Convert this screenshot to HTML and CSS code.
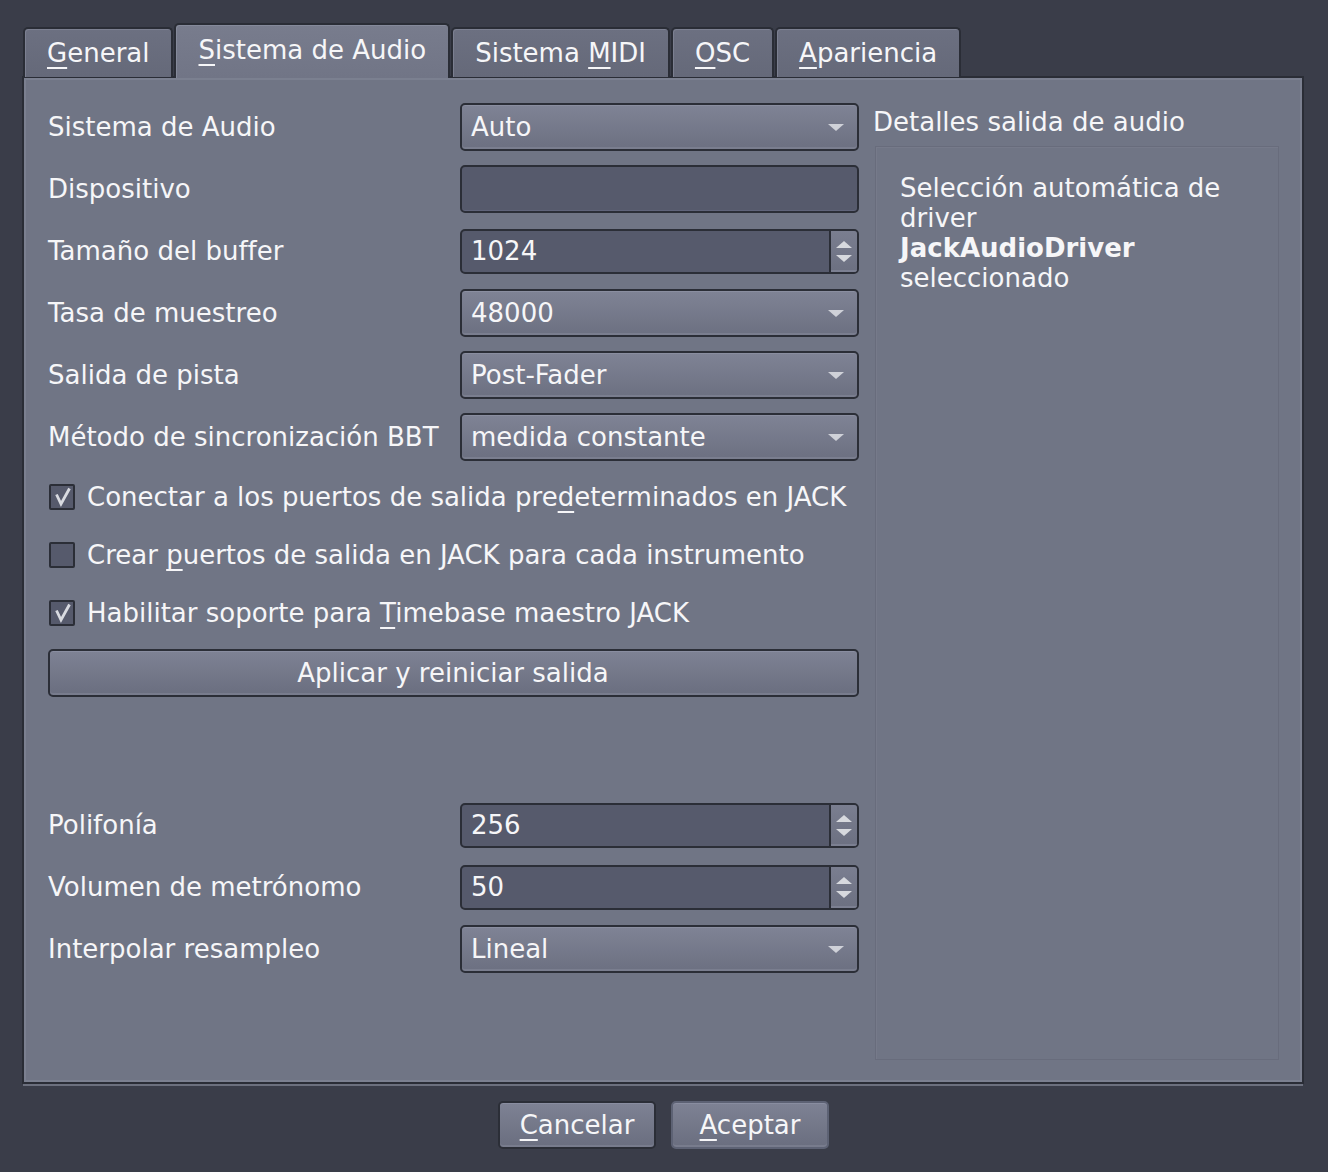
FILE: index.html
```html
<!DOCTYPE html>
<html lang="es">
<head>
<meta charset="utf-8">
<title>Preferencias</title>
<link rel="stylesheet" href="styles.css">
</head>
<body>
<div class="dialog">
  <div class="tabbar">
    <div class="tab"><span><u>G</u>eneral</span></div>
    <div class="tab active"><span><u>S</u>istema de Audio</span></div>
    <div class="tab"><span>Sistema <u>M</u>IDI</span></div>
    <div class="tab"><span><u>O</u>SC</span></div>
    <div class="tab"><span><u>A</u>pariencia</span></div>
  </div>
  <div class="panel">
    <div class="left">
      <div class="row"><span class="label">Sistema de Audio</span><div class="combo">Auto<span class="arrow"></span></div></div>
      <div class="row"><span class="label">Dispositivo</span><div class="edit"></div></div>
      <div class="row"><span class="label">Tamaño del buffer</span><div class="spin"><span class="val">1024</span><span class="btns"><span class="up"></span><span class="down"></span></span></div></div>
      <div class="row"><span class="label">Tasa de muestreo</span><div class="combo">48000<span class="arrow"></span></div></div>
      <div class="row"><span class="label">Salida de pista</span><div class="combo">Post-Fader<span class="arrow"></span></div></div>
      <div class="row"><span class="label">Método de sincronización BBT</span><div class="combo">medida constante<span class="arrow"></span></div></div>
      <div class="check"><span class="box"><svg class="tick" width="22" height="22" viewBox="0 0 22 22"><path d="M5.5 8.5 L10 18 L18.5 2.5" /></svg></span><span>Conectar a los puertos de salida pre<u>d</u>eterminados en JACK</span></div>
      <div class="check"><span class="box"></span><span>Crear <u>p</u>uertos de salida en JACK para cada instrumento</span></div>
      <div class="check"><span class="box"><svg class="tick" width="22" height="22" viewBox="0 0 22 22"><path d="M5.5 8.5 L10 18 L18.5 2.5" /></svg></span><span>Habilitar soporte para <u>T</u>imebase maestro JACK</span></div>
      <div class="button wide">Aplicar y reiniciar salida</div>
      <div class="row gap-top"><span class="label">Polifonía</span><div class="spin"><span class="val">256</span><span class="btns"><span class="up"></span><span class="down"></span></span></div></div>
      <div class="row"><span class="label">Volumen de metrónomo</span><div class="spin"><span class="val">50</span><span class="btns"><span class="up"></span><span class="down"></span></span></div></div>
      <div class="row"><span class="label">Interpolar resampleo</span><div class="combo">Lineal<span class="arrow"></span></div></div>
    </div>
    <div class="right">
      <div class="group-title">Detalles salida de audio</div>
      <div class="group">
        <p>Selección automática de<br>driver<br><b>JackAudioDriver</b><br>seleccionado</p>
      </div>
    </div>
  </div>
  <div class="actions">
    <div class="button action focus"><span><u>C</u>ancelar</span></div>
    <div class="button action"><span><u>A</u>ceptar</span></div>
  </div>
</div>
</body>
</html>
```
FILE: styles.css
```css
html, body {
  margin: 0;
  padding: 0;
}
body {
  background: #3a3d49;
  width: 1328px;
  height: 1172px;
  overflow: hidden;
  font-family: "DejaVu Sans", "Noto Sans", sans-serif;
  font-size: 26px;
  color: #f6f6f8;
}
u {
  text-decoration: underline;
  text-decoration-thickness: 2px;
  text-underline-offset: 5px;
}
.dialog {
  padding: 23px 24px 0 22px;
}
.tabbar {
  display: flex;
  align-items: flex-end;
  padding-left: 1px;
  height: 54px;
  position: relative;
  z-index: 2;
}
.tab {
  box-sizing: border-box;
  height: 50px;
  margin-right: 1px;
  padding: 0 22px;
  line-height: 48px;
  border: 2px solid #2a2d36;
  border-bottom: none;
  border-radius: 5px 5px 0 0;
  background: linear-gradient(#6c7081, #656979);
  box-shadow: inset 1px 1px 0 #7c8091;
  white-space: nowrap;
}
.tab.active {
  height: 55px;
  margin-bottom: -1px;
  background: linear-gradient(#787c8d, #717586);
  box-shadow: inset 1px 1px 0 #858a9b;
  line-height: 50px;
}
.panel {
  box-sizing: border-box;
  height: 1008px;
  margin-top: -1px;
  border: 2px solid #2a2d36;
  background: #707585;
  box-shadow: inset 2px 2px 0 #7b8090, inset -2px -2px 0 #7b8090, 0 3px 0 -1px #6c707e;
  display: flex;
  padding: 25px 23px 22px 24px;
  gap: 14px;
}
.left {
  width: 811px;
  display: flex;
  flex-direction: column;
  gap: 14px;
}
.row {
  display: flex;
  align-items: center;
  height: 48px;
}
.row.gap-top {
  margin-top: 90px;
}
.label {
  width: 412px;
  white-space: nowrap;
}
.combo, .edit, .spin {
  box-sizing: border-box;
  width: 399px;
  border: 2px solid #2b2e37;
  border-radius: 5px;
}
.combo {
  height: 48px;
  display: flex;
  align-items: center;
  padding-left: 9px;
  position: relative;
  background: linear-gradient(#7f8395, #6c7081);
  box-shadow: inset 0 1px 0 #8a8ea0, inset 0 -2px 0 #7a7e8f;
}
.arrow {
  position: absolute;
  right: 13px;
  top: 19px;
  width: 0;
  height: 0;
  border-left: 8px solid transparent;
  border-right: 8px solid transparent;
  border-top: 7px solid #cfd1d8;
}
.edit {
  height: 48px;
  background: #565a6c;
  box-shadow: inset 0 -1px 0 #60647a;
}
.spin {
  height: 45px;
  display: flex;
  background: #565a6c;
  overflow: hidden;
}
.spin .val {
  flex: 1;
  padding-left: 9px;
  line-height: 41px;
  border-right: 2px solid #2b2e37;
}
.spin .btns {
  width: 26px;
  display: flex;
  flex-direction: column;
  align-items: center;
  justify-content: center;
  gap: 7px;
  background: linear-gradient(#7a7e90, #6c7081);
  box-shadow: inset 0 -2px 0 #7c8092;
}
.up, .down {
  width: 0;
  height: 0;
  border-left: 8px solid transparent;
  border-right: 8px solid transparent;
}
.up {
  border-bottom: 7px solid #d7d9de;
}
.down {
  border-top: 7px solid #d7d9de;
}
.check {
  display: flex;
  align-items: center;
  height: 44px;
  white-space: nowrap;
  padding-left: 1px;
}
.box {
  box-sizing: border-box;
  width: 26px;
  height: 26px;
  margin-right: 12px;
  border: 2px solid #2b2e37;
  border-radius: 2px;
  background: #565a6c;
  display: flex;
}
.tick {
  display: block;
}
.tick path {
  fill: none;
  stroke: #d8dae0;
  stroke-width: 2.8;
  stroke-linejoin: miter;
  stroke-linecap: butt;
}
.button {
  box-sizing: border-box;
  height: 48px;
  border: 2px solid #2b2e37;
  border-radius: 5px;
  background: linear-gradient(#7e8294, #6a6e7f);
  box-shadow: inset 0 1px 0 #898da0, inset 0 -2px 0 #787c8d;
  display: flex;
  align-items: center;
  justify-content: center;
}
.button.wide {
  width: 811px;
  padding-right: 1px;
}
.right {
  flex: 1;
  display: flex;
  flex-direction: column;
}
.group-title {
  line-height: 30px;
  margin-top: 4px;
  white-space: nowrap;
}
.group {
  flex: 1;
  margin-top: 9px;
  margin-left: 2px;
  border: 1px solid #686c7c;
  box-shadow: inset 1px 1px 0 #767a8a;
  padding: 26px 24px 0 24px;
}
.group p {
  margin: 0;
  line-height: 30px;
}
.group b {
  font-weight: bold;
}
.actions {
  display: flex;
  justify-content: center;
  gap: 15px;
  margin-top: 17px;
  padding-left: 1px;
}
.button.action {
  width: 158px;
  border-color: #5d6274;
}
.button.action.focus {
  border-color: #2b2e37;
}
```
